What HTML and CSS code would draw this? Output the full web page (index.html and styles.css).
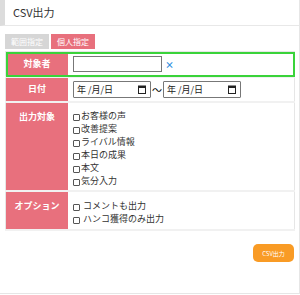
FILE: index.html
```html
<!DOCTYPE html>
<html lang="ja">
<head>
  <meta charset="UTF-8">
  <title>CSV出力</title>
  <link rel="stylesheet" href="styles.css">
</head>
<body>
  <div class="page">
    <div class="header">CSV出力</div>

    <div class="content">
      <div class="tabs">
        <span class="tab">範囲指定</span>
        <span class="tab active">個人指定</span>
      </div>

      <table class="form-table">
        <tr class="target-row">
          <th>対象者</th>
          <td>
            <input type="text" class="person-input">
            <span class="clear">×</span>
          </td>
        </tr>
        <tr class="date-row">
          <th>日付</th>
          <td>
            <div class="date-range">
              <div class="date-input">
                <span>年 /月/日</span>
                <svg class="cal" width="8" height="9" viewBox="0 0 8 9"><rect x="0.5" y="1" width="7" height="7.5" fill="none" stroke="#222" stroke-width="1"/><rect x="0.5" y="1" width="7" height="2" fill="#222"/></svg>
              </div>
              <span class="tilde">〜</span>
              <div class="date-input">
                <span>年 /月/日</span>
                <svg class="cal" width="8" height="9" viewBox="0 0 8 9"><rect x="0.5" y="1" width="7" height="7.5" fill="none" stroke="#222" stroke-width="1"/><rect x="0.5" y="1" width="7" height="2" fill="#222"/></svg>
              </div>
            </div>
          </td>
        </tr>
        <tr class="list-row">
          <th>出力対象</th>
          <td class="checks">
            <label><input type="checkbox">お客様の声</label>
            <label><input type="checkbox">改善提案</label>
            <label><input type="checkbox">ライバル情報</label>
            <label><input type="checkbox">本日の成果</label>
            <label><input type="checkbox">本文</label>
            <label><input type="checkbox">気分入力</label>
          </td>
        </tr>
        <tr class="list-row">
          <th>オプション</th>
          <td class="checks options">
            <label><input type="checkbox">コメントも出力</label>
            <label><input type="checkbox">ハンコ獲得のみ出力</label>
          </td>
        </tr>
      </table>

      <div class="actions">
        <button class="csv-button">CSV出力</button>
      </div>
    </div>
  </div>
</body>
</html>
```

FILE: styles.css
```css
body {
  margin: 0;
  font-family: "Noto Sans CJK JP", "Noto Sans", sans-serif;
  background: #fff;
}

.page {
  height: 294px;
  border-right: 1px solid #e6e6e6;
  border-bottom: 1px solid #e6e6e6;
  box-sizing: border-box;
}

.header {
  height: 25px;
  line-height: 25px;
  border-left: 5px solid #dcdcdc;
  border-bottom: 1px solid #e8e8e8;
  padding-left: 8px;
  font-size: 11px;
  color: #333;
}

.content {
  padding: 8px 5px 0 5px;
}

.tabs {
  display: flex;
  gap: 2px;
  height: 15px;
}

.tab {
  width: 44px;
  height: 15px;
  line-height: 15px;
  text-align: center;
  font-size: 8px;
  color: #fff;
  background: #d6d6d6;
}

.tab.active {
  background: #e8707d;
}

.form-table {
  width: 290px;
  border-collapse: collapse;
  border: 1px solid #e6e6e6;
  margin-top: 2px;
}

.form-table th {
  width: 62px;
  background: #e8707d;
  color: #fff;
  font-size: 9px;
  font-weight: bold;
  vertical-align: top;
  padding: 0;
  border-bottom: 2px solid #f1f1f1;
}

.form-table td {
  padding: 3px 5px;
  border-bottom: 2px solid #f1f1f1;
  font-size: 9px;
}

.target-row {
  outline: 2px solid #3ad33a;
  outline-offset: -2px;
}

.target-row th {
  line-height: 24px;
}

.date-row th {
  line-height: 22px;
}

.person-input {
  width: 89px;
  height: 16px;
  box-sizing: border-box;
  padding: 0 2px;
  border: 1px solid #777;
  margin: 0;
  vertical-align: middle;
}

.clear {
  color: #2f8fe0;
  font-size: 9px;
  font-weight: bold;
  margin-left: 1px;
  vertical-align: middle;
}

.date-range {
  display: flex;
  align-items: center;
}

.date-input {
  width: 78px;
  height: 17px;
  box-sizing: border-box;
  display: flex;
  align-items: center;
  justify-content: space-between;
  padding: 0 4px 0 3px;
  border: 1px solid #777;
  border-radius: 1px;
  font-size: 9px;
  color: #222;
}

.tilde {
  width: 12px;
  text-align: center;
  font-size: 10px;
}

.list-row th {
  padding-top: 7px;
}

.form-table .checks {
  padding-top: 6px;
  padding-bottom: 3px;
}

.checks label {
  display: flex;
  align-items: center;
  height: 13px;
  font-size: 9px;
  color: #333;
}

.checks input {
  appearance: none;
  width: 7px;
  height: 7px;
  border: 1px solid #555;
  border-radius: 1px;
  margin: 3px 1px 0 0;
  box-sizing: border-box;
}

.options label input {
  margin-right: 3px;
}

.form-table .options {
  padding-top: 7px;
  padding-bottom: 4px;
}

.actions {
  display: flex;
  justify-content: flex-end;
  padding-top: 13px;
}

.csv-button {
  width: 41px;
  height: 18px;
  border: none;
  border-radius: 5px;
  background: #f99b25;
  color: #fff;
  font-size: 6px;
  padding: 0;
  font-family: inherit;
}
```
